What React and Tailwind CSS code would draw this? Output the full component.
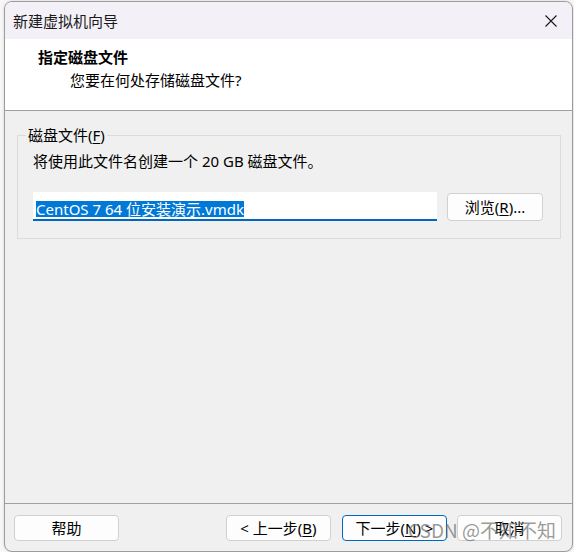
const FONT = { fontFamily: '"Noto Sans", "Noto Sans CJK SC", sans-serif' }

function Btn({ children, primary }) {
  return (
    <button
      className={
        primary
          ? 'w-[105px] h-[26px] rounded-[4px] bg-[#fdfdfd] border border-[#0067c0] text-[15px] leading-[20px] text-black'
          : 'w-[105px] h-[26px] rounded-[4px] bg-[#fdfdfd] border border-[#d0d0d0] text-[15px] leading-[20px] text-black'
      }
    >
      {children}
    </button>
  )
}

export default function App() {
  return (
    <div className="relative w-[574px] h-[552px] bg-[#f7f7f7] pt-[1px] pl-[4px]" style={FONT}>
      <div className="w-[569px] h-[551px] flex flex-col rounded-[8px] border border-[#9c9c9c] bg-[#f0f0f0] overflow-hidden shadow-[0_0_3px_rgba(0,0,0,0.15)]">
        {/* title bar */}
        <div className="h-[37px] shrink-0 flex items-center justify-between bg-[#f3f0f7] pl-[8px] pr-[12px]">
          <span className="text-[15px] leading-[20px] text-[#1a1a1a]">新建虚拟机向导</span>
          <svg width="14" height="14" viewBox="0 0 14 14" className="mr-[2px]">
            <path d="M1.5 1.5 L12.5 12.5 M12.5 1.5 L1.5 12.5" stroke="#1a1a1a" strokeWidth="1.1" fill="none" />
          </svg>
        </div>

        {/* header */}
        <div className="h-[72px] shrink-0 bg-white border-b border-[#a0a0a0] pt-[8px]">
          <div className="pl-[33px] text-[15px] leading-[20px] font-bold text-black">指定磁盘文件</div>
          <div className="pl-[65px] mt-[3px] text-[15px] leading-[20px] text-black">您要在何处存储磁盘文件?</div>
        </div>

        {/* body */}
        <div className="flex-1 pl-[12px] pt-[14px]">
          <fieldset className="w-[544px] border border-[#dcdcdc] pl-[15px] pb-[17px]">
            <legend className="ml-[-7px] px-[2px] text-[15px] leading-[20px] text-black">
              磁盘文件(<span className="underline underline-offset-2">F</span>)
            </legend>
            <div className="mt-[6px] text-[15px] leading-[20px] text-black">将使用此文件名创建一个 20 GB 磁盘文件。</div>
            <div className="mt-[21px] flex items-start gap-[10px]">
              <div className="w-[404px] h-[29px] bg-white border-b-2 border-[#0067c0] pl-[3px] pt-[5px]">
                <span className="bg-[#0078d7] text-white text-[15px] leading-[16px] inline-block">
                  CentOS 7 64 位安装演示.vmdk
                </span>
              </div>
              <button className="mt-[1px] w-[96px] h-[28px] rounded-[4px] bg-[#fdfdfd] border border-[#d0d0d0] text-[15px] leading-[20px] text-black">
                浏览(<span className="underline underline-offset-2">R</span>)...
              </button>
            </div>
          </fieldset>
        </div>

        {/* footer */}
        <div className="h-[48px] shrink-0 border-t border-[#a0a0a0] flex items-start pt-[11px] pl-[9px] pr-[10px]">
          <Btn>帮助</Btn>
          <div className="flex-1" />
          <Btn>
            &lt; 上一步(<span className="underline underline-offset-2">B</span>)
          </Btn>
          <div className="w-[11px]" />
          <Btn primary>
            下一步(<span className="underline underline-offset-2">N</span>) &gt;
          </Btn>
          <div className="w-[10px]" />
          <Btn>取消</Btn>
        </div>
      </div>

      {/* watermark */}
      <div
        className="absolute left-[408px] top-[517px] text-[19px] leading-[26px] text-[rgba(110,110,110,0.7)] whitespace-nowrap"
        style={{ fontFamily: '"Noto Sans CJK SC", sans-serif' }}
      >
        CSDN @不知不知
      </div>
    </div>
  )
}
